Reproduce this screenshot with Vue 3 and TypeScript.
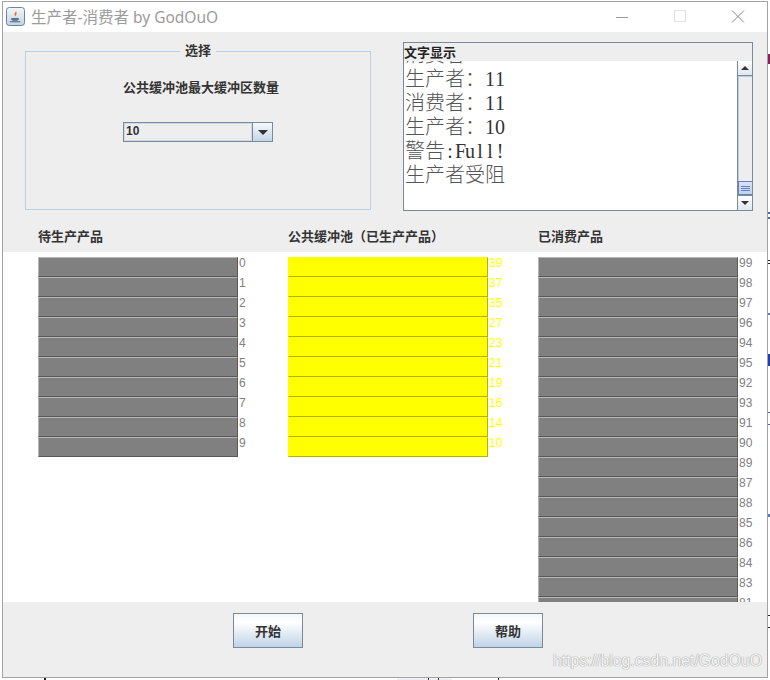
<template>
  <div class="desktop">
    <span
      v-for="s in scraps"
      :key="s.id"
      class="scrap"
      :style="{ left: s.x + 'px', top: s.y + 'px', width: s.w + 'px', height: s.h + 'px', background: s.color }"
    ></span>
    <div class="window">
      <header class="titlebar">
        <svg class="java-icon" width="19" height="19" viewBox="0 0 20 20">
          <defs>
            <linearGradient id="icon-bg" x1="0" y1="0" x2="0" y2="1">
              <stop offset="0" stop-color="#f4f7fa" />
              <stop offset="1" stop-color="#c3d3e2" />
            </linearGradient>
          </defs>
          <rect x="0.5" y="0.5" width="19" height="19" rx="3" fill="url(#icon-bg)" stroke="#5f7d98" />
          <path d="M10.5 3c1 2-2 3-1.500 5 .2 1 .8 1.500 1 2-.2-1 1.800-2.500 1-4.200-.3-.8-.6-1.800-.5-2.800z" fill="#e2762a" />
          <path d="M5.500 11.500h8v1.200c0 1-1 1.800-2 1.800h-4c-1 0-2-.8-2-1.800z" fill="#59728a" />
          <path d="M4 15.500h11" stroke="#59728a" stroke-width="1.200" fill="none" />
        </svg>
        <span class="title-text">生产者-消费者 by GodOuO</span>
        <div class="window-controls">
          <svg width="14" height="14" viewBox="0 0 14 14"><path d="M1 7.500h12" stroke="#9a9a9a" /></svg>
          <svg width="14" height="14" viewBox="0 0 14 14"><rect x="1.500" y="0.500" width="11" height="11" fill="none" stroke="#e3e3e3" /></svg>
          <svg width="14" height="14" viewBox="0 0 14 14"><path d="M1 0.500l12 12M13 0.500L1 12.500" stroke="#8a8a8a" /></svg>
        </div>
      </header>

      <section class="top-panel">
        <div class="top-row">
          <fieldset class="choose-box">
            <legend>选择</legend>
            <p class="choose-label">公共缓冲池最大缓冲区数量</p>
            <div class="combo">
              <span class="combo-value">10</span>
              <span class="combo-button"><i class="arrow-down big"></i></span>
            </div>
          </fieldset>

          <div class="text-box">
            <div class="text-box-title">文字显示</div>
            <div class="text-box-body">
              <div class="log">
                <div class="log-lines">
                  <div v-for="line in logLines" :key="line.id" class="log-line">{{ line.cjk }}<span v-for="(ch, i) in line.latin" :key="i" class="latin">{{ ch }}</span></div>
                </div>
              </div>
              <div class="scrollbar">
                <span class="scroll-button"><i class="arrow-up"></i></span>
                <span class="scroll-track"></span>
                <span class="scroll-thumb"><i></i><i></i><i></i></span>
                <span class="scroll-button down"><i class="arrow-down"></i></span>
              </div>
            </div>
          </div>
        </div>

        <div class="headings">
          <span>待生产产品</span>
          <span>公共缓冲池（已生产产品）</span>
          <span>已消费产品</span>
        </div>
      </section>

      <main class="columns">
        <div v-for="col in columns" :key="col.id" class="column" :class="col.tone">
          <div v-for="n in col.items" :key="n" class="item">
            <span class="bar"></span>
            <span class="num">{{ n }}</span>
          </div>
        </div>
      </main>

      <footer class="bottom-panel">
        <button class="java-button" type="button">开始</button>
        <button class="java-button" type="button">帮助</button>
      </footer>
    </div>
    <span class="watermark">https://blog.csdn.net/GodOuO</span>
  </div>
</template>

<script setup lang="ts">
const logLines = [
  { id: 1, cjk: '消费者', latin: '' },
  { id: 2, cjk: '生产者：', latin: '11' },
  { id: 3, cjk: '消费者：', latin: '11' },
  { id: 4, cjk: '生产者：', latin: '10' },
  { id: 5, cjk: '警告', latin: ':Full!' },
  { id: 6, cjk: '生产者受阻', latin: '' },
]

const columns = [
  { id: 'waiting', tone: 'gray', items: [0, 1, 2, 3, 4, 5, 6, 7, 8, 9] },
  { id: 'buffer', tone: 'yellow', items: [39, 37, 35, 27, 23, 21, 19, 16, 14, 10] },
  { id: 'consumed', tone: 'gray', items: [99, 98, 97, 96, 94, 95, 92, 93, 91, 90, 89, 87, 88, 85, 86, 84, 83, 81] },
]

// bits of the window behind that stick out past the frame
const scraps = [
  { id: 1, x: 768, y: 54, w: 2, h: 10, color: '#8a1f5c' },
  { id: 2, x: 768, y: 212, w: 2, h: 2, color: '#4a66b8' },
  { id: 3, x: 768, y: 217, w: 2, h: 2, color: '#4a66b8' },
  { id: 4, x: 768, y: 260, w: 2, h: 1, color: '#222' },
  { id: 5, x: 768, y: 263, w: 2, h: 1, color: '#222' },
  { id: 6, x: 768, y: 313, w: 2, h: 2, color: '#5a78c8' },
  { id: 7, x: 768, y: 354, w: 2, h: 12, color: '#1f3fb0' },
  { id: 8, x: 768, y: 412, w: 2, h: 1, color: '#4a66b8' },
  { id: 9, x: 768, y: 424, w: 2, h: 1, color: '#4a66b8' },
  { id: 10, x: 768, y: 514, w: 2, h: 3, color: '#5a78c8' },
  { id: 11, x: 768, y: 615, w: 2, h: 1, color: '#222' },
  { id: 12, x: 768, y: 627, w: 2, h: 1, color: '#222' },
  { id: 13, x: 44, y: 678, w: 2, h: 2, color: '#222' },
  { id: 14, x: 397, y: 678, w: 55, h: 2, color: '#eef0f6' },
  { id: 15, x: 428, y: 678, w: 1, h: 2, color: '#333' },
  { id: 16, x: 438, y: 678, w: 1, h: 2, color: '#333' },
  { id: 17, x: 498, y: 678, w: 1, h: 2, color: '#222' },
]
</script>

<style>
html,
body {
  margin: 0;
  background: #fff;
}
</style>

<style scoped>
.desktop {
  position: relative;
  width: 770px;
  height: 680px;
  overflow: hidden;
  background: #fff;
  padding: 1px 0 0 2px;
  box-sizing: border-box;
  font-family: "Liberation Sans", "Noto Sans CJK SC", sans-serif;
}
.scrap {
  position: absolute;
}
.window {
  width: 766px;
  height: 677px;
  box-sizing: border-box;
  border: 1px solid #a3a3a3;
  display: flex;
  flex-direction: column;
  background: #fff;
}
.titlebar {
  height: 30px;
  flex: none;
  display: flex;
  align-items: center;
  padding-left: 3px;
  background: #fff;
}
.java-icon {
  margin-top: -1px;
}
.title-text {
  margin-left: 6px;
  margin-top: -2px;
  font-family: "Noto Sans", "Noto Sans CJK SC", sans-serif;
  font-size: 15.500px;
  color: #9b9b9b;
}
.window-controls {
  margin-left: auto;
  margin-right: 22px;
  display: flex;
  gap: 44px;
}
.top-panel {
  height: 220px;
  flex: none;
  background: #eeeeee;
  display: flex;
  flex-direction: column;
}
.top-row {
  display: flex;
  align-items: flex-start;
  padding: 10px 0 0 22px;
}
.choose-box {
  width: 346px;
  height: 167px;
  box-sizing: border-box;
  margin: 1px 0 0;
  padding: 0;
  border: 1px solid #b8cfe5;
  min-width: 0;
}
.choose-box legend {
  margin: 0 auto;
  padding: 0 5px;
  font-size: 13px;
  line-height: 16px;
  font-weight: 700;
  color: #333;
}
.choose-label {
  margin: 20px 0 0 97px;
  font-size: 13px;
  line-height: 18px;
  font-weight: 700;
  color: #333;
}
.combo {
  margin: 25px 0 0 97px;
  width: 150px;
  height: 20px;
  box-sizing: border-box;
  border: 1px solid #7a8a99;
  display: flex;
}
.combo-value {
  flex: 1;
  border: 1px solid #c9d9e8;
  padding-left: 1px;
  font-size: 12px;
  line-height: 15px;
  font-weight: 700;
  color: #333;
}
.combo-button {
  width: 19px;
  border-left: 1px solid #7a8a99;
  background: linear-gradient(#f6f9fc, #c5d6e8);
  display: flex;
  align-items: center;
  justify-content: center;
}
.arrow-down,
.arrow-up {
  display: block;
  width: 0;
  height: 0;
  border-left: 4px solid transparent;
  border-right: 4px solid transparent;
}
.arrow-down {
  border-top: 4px solid #333;
}
.arrow-down.big {
  border-left-width: 5px;
  border-right-width: 5px;
  border-top-width: 5px;
}
.arrow-up {
  border-bottom: 4px solid #333;
}
.text-box {
  margin-left: 32px;
  width: 350px;
  height: 169px;
  box-sizing: border-box;
  border: 1px solid #7a8a99;
  display: flex;
  flex-direction: column;
}
.text-box-title {
  height: 18px;
  flex: none;
  font-size: 13px;
  line-height: 17px;
  padding-top: 1px;
  box-sizing: border-box;
  font-weight: 700;
  color: #222;
}
.text-box-body {
  flex: 1;
  min-height: 0;
  display: flex;
  background: #fff;
}
.log {
  flex: 1;
  overflow: hidden;
  padding-left: 1px;
}
.log-lines {
  margin-top: -19px;
}
.log-line {
  height: 24px;
  font-family: "Noto Sans CJK SC", sans-serif;
  font-size: 20px;
  font-weight: 300;
  line-height: 24px;
  color: #555;
  white-space: pre;
  overflow: hidden;
}
.latin {
  display: inline-block;
  width: 10px;
  text-align: center;
  font-family: "Liberation Serif", serif;
  color: #333;
}
.scrollbar {
  width: 15px;
  flex: none;
  box-sizing: border-box;
  border-left: 1px solid #7a8a99;
  display: flex;
  flex-direction: column;
  background: #eeeeee;
}
.scroll-button {
  height: 15px;
  flex: none;
  background: linear-gradient(#fff, #dfe7ef);
  border-bottom: 1px solid #7a8a99;
  box-sizing: border-box;
  display: flex;
  align-items: center;
  justify-content: center;
}
.scroll-button.down {
  border-bottom: 0;
  border-top: 1px solid #7a8a99;
}
.scroll-track {
  flex: 1;
  border-left: 1px solid #b8cfe5;
  border-top: 1px solid #b8cfe5;
}
.scroll-thumb {
  height: 14px;
  flex: none;
  box-sizing: border-box;
  border: 1px solid #6382bf;
  border-right: 0;
  background: linear-gradient(#d7e3f4, #c1d2ec);
  display: flex;
  flex-direction: column;
  justify-content: center;
  align-items: center;
  gap: 1px;
}
.scroll-thumb i {
  display: block;
  width: 9px;
  height: 1px;
  background: #6382bf;
}
.headings {
  margin-top: auto;
  padding: 0 0 6px 35px;
  display: grid;
  grid-template-columns: repeat(3, 250px);
  font-size: 13px;
  line-height: 18px;
  font-weight: 700;
  color: #333;
}
.columns {
  height: 350px;
  flex: none;
  overflow: hidden;
  display: grid;
  grid-template-columns: repeat(3, 250px);
  align-items: start;
  padding: 5px 0 0 35px;
  box-sizing: border-box;
  background: #fff;
}
.item {
  height: 20px;
  display: flex;
}
.bar {
  width: 200px;
  height: 20px;
  box-sizing: border-box;
  border-style: solid;
  border-width: 1px;
}
.num {
  padding-left: 1px;
  font-size: 12px;
  line-height: 13px;
}
.gray .bar {
  background: #808080;
  border-color: #b6b6b6 #595959 #595959 #b6b6b6;
}
.gray .num {
  color: #808080;
}
.yellow .bar {
  background: #ffff00;
  border-color: #ffff00 #b2b200 #b2b200 #ffff00;
}
.yellow .num {
  color: #ffff00;
}
.bottom-panel {
  flex: 1;
  background: #eeeeee;
  display: flex;
  align-items: flex-start;
  gap: 170px;
  padding: 11px 0 0 230px;
}
.java-button {
  width: 70px;
  height: 35px;
  box-sizing: border-box;
  border: 1px solid #7a8a99;
  background: linear-gradient(#f3f7fb 0%, #ffffff 25%, #c0d3e7 100%);
  font-family: inherit;
  font-size: 13px;
  font-weight: 700;
  color: #333;
  padding: 0;
}
.watermark {
  position: absolute;
  left: 553px;
  top: 651px;
  font-size: 15.800px;
  line-height: 20px;
  color: #f6f6f6;
  text-shadow: 0 0 1px #999, 0 0 1px #999;
  white-space: nowrap;
}
</style>
